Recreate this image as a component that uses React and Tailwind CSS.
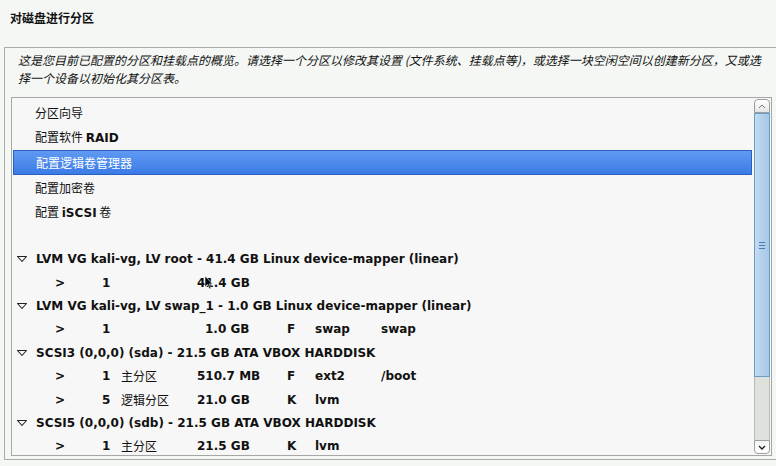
import React from "react";

const cjk = "font-['Noto_Sans_CJK_SC','DejaVu_Sans',sans-serif]";
const dv = "font-['DejaVu_Sans','Noto_Sans_CJK_SC',sans-serif]";

const menu = [
  { id: "guide", label: <>分区向导</> },
  { id: "raid", label: <>配置软件 <b className={`${dv} font-bold`}>RAID</b></> },
  { id: "lvm", label: <>配置逻辑卷管理器</>, selected: true },
  { id: "crypt", label: <>配置加密卷</> },
  { id: "iscsi", label: <>配置 <b className={`${dv} font-bold`}>iSCSI</b> 卷</> },
];

const tree = [
  {
    title: "LVM VG kali-vg, LV root - 41.4 GB Linux device-mapper (linear)",
    parts: [{ num: "1", type: "", size: "41.4 GB", flag: "", fs: "", mount: "" }],
  },
  {
    title: "LVM VG kali-vg, LV swap_1 - 1.0 GB Linux device-mapper (linear)",
    parts: [{ num: "1", type: "", size: "1.0 GB", pad: true, flag: "F", fs: "swap", mount: "swap" }],
  },
  {
    title: "SCSI3 (0,0,0) (sda) - 21.5 GB ATA VBOX HARDDISK",
    parts: [
      { num: "1", type: "主分区", size: "510.7 MB", flag: "F", fs: "ext2", mount: "/boot" },
      { num: "5", type: "逻辑分区", size: "21.0 GB", flag: "K", fs: "lvm", mount: "" },
    ],
  },
  {
    title: "SCSI5 (0,0,0) (sdb) - 21.5 GB ATA VBOX HARDDISK",
    parts: [{ num: "1", type: "主分区", size: "21.5 GB", flag: "K", fs: "lvm", mount: "" }],
  },
];

function Triangle() {
  return (
    <svg width="12" height="8" viewBox="0 0 12 8" className="shrink-0">
      <path d="M1.5 1.5 H10.5 L6 6.5 Z" fill="none" stroke="#222" strokeWidth="1.1" strokeLinejoin="round" />
    </svg>
  );
}

function Scrollbar() {
  return (
    <div className="flex flex-col w-[16px] shrink-0 mt-[1px] mb-[1px] mr-[1px]">
      <div className="h-[14px] rounded-t-[4px] border border-[#9aa09a] bg-gradient-to-b from-white to-[#e4e6e4] flex items-center justify-center">
        <svg width="8" height="5" viewBox="0 0 8 5">
          <path d="M1 4 L4 1 L7 4" fill="none" stroke="#777" strokeWidth="1" />
        </svg>
      </div>
      <div className="h-[264px] border border-[#6a9cc8] bg-gradient-to-r from-[#c6dcf0] via-[#b2d0ec] to-[#a6c8e8] flex items-center justify-center">
        <div className="flex flex-col gap-[2px]">
          <div className="w-[6px] h-[1px] bg-[#4a7cb0]" />
          <div className="w-[6px] h-[1px] bg-[#4a7cb0]" />
          <div className="w-[6px] h-[1px] bg-[#4a7cb0]" />
        </div>
      </div>
      <div className="flex-1 bg-[#dde2dd] border-x border-[#b8bcb8]" />
      <div className="h-[14px] rounded-b-[4px] border border-[#9aa09a] bg-gradient-to-b from-[#f4f6f4] to-white flex items-center justify-center">
        <svg width="8" height="5" viewBox="0 0 8 5">
          <path d="M1 1 L4 4 L7 1" fill="none" stroke="#222" strokeWidth="1.4" />
        </svg>
      </div>
    </div>
  );
}

export default function App() {
  return (
    <div className="w-[776px] h-[466px] overflow-hidden bg-[#f4f7f4] text-[#111]">
      <div className={`${cjk} font-bold text-[12px] leading-[17px] pt-[9px] pl-[10px]`}>对磁盘进行分区</div>

      <div className="mt-[21px] ml-[4px] w-[790px] h-[413px] border border-[#a9aca9] flex flex-col">
        <div className={`${cjk} italic text-[12px] leading-[18px] pt-[3px] pl-[13px] whitespace-nowrap`}>
          这是您目前已配置的分区和挂载点的概览。请选择一个分区以修改其设置 (文件系统、挂载点等)，或选择一块空闲空间以创建新分区，又或选
          <br />
          择一个设备以初始化其分区表。
        </div>

        <div className="mt-[10px] ml-[6px] w-[761px] h-[359px] border border-[#a4a7a4] bg-[#f7f7f7] flex relative">
          <div className="flex-1 overflow-hidden pt-[2px] pl-[1px] pr-[2px]">
            {menu.map((m) => (
              <div
                key={m.id}
                className={`${cjk} h-[25px] flex items-center pl-[22px] text-[12px] ${
                  m.selected
                    ? "bg-gradient-to-b from-[#5f9af2] to-[#3b7be6] border border-[#2b5fbf] text-white"
                    : ""
                }`}
              >
                <span className="whitespace-pre">{m.label}</span>
              </div>
            ))}
            <div className="h-[22.5px]" />
            {tree.map((d) => (
              <React.Fragment key={d.title}>
                <div className={`${dv} h-[23.4px] flex items-center font-bold text-[12px] pl-[3px] gap-[8px] whitespace-nowrap`}>
                  <Triangle />
                  <span>{d.title}</span>
                </div>
                {d.parts.map((p, i) => (
                  <div key={i} className={`${dv} h-[23.4px] flex items-center font-bold text-[12px] pl-[42px] whitespace-nowrap`}>
                    <span className="w-[47px]">&gt;</span>
                    <span className="w-[19px]">{p.num}</span>
                    <span className={`${cjk} font-normal w-[76px] text-[12px]`}>{p.type}</span>
                    <span className={`w-[90px] ${p.pad ? "pl-[8px]" : ""}`}>{p.size}</span>
                    <span className="w-[28px]">{p.flag}</span>
                    <span className="w-[66px]">{p.fs}</span>
                    <span>{p.mount}</span>
                  </div>
                ))}
              </React.Fragment>
            ))}
          </div>
          <Scrollbar />
          <svg width="10" height="16" viewBox="0 0 10 16" className="absolute left-[192px] top-[177px]">
            <path d="M1 1 L1 12 L3.5 9.5 L5.5 14 L7 13.3 L5 9 L8.5 9 Z" fill="#000" stroke="#fff" strokeWidth="0.6" />
          </svg>
        </div>
      </div>
    </div>
  );
}
